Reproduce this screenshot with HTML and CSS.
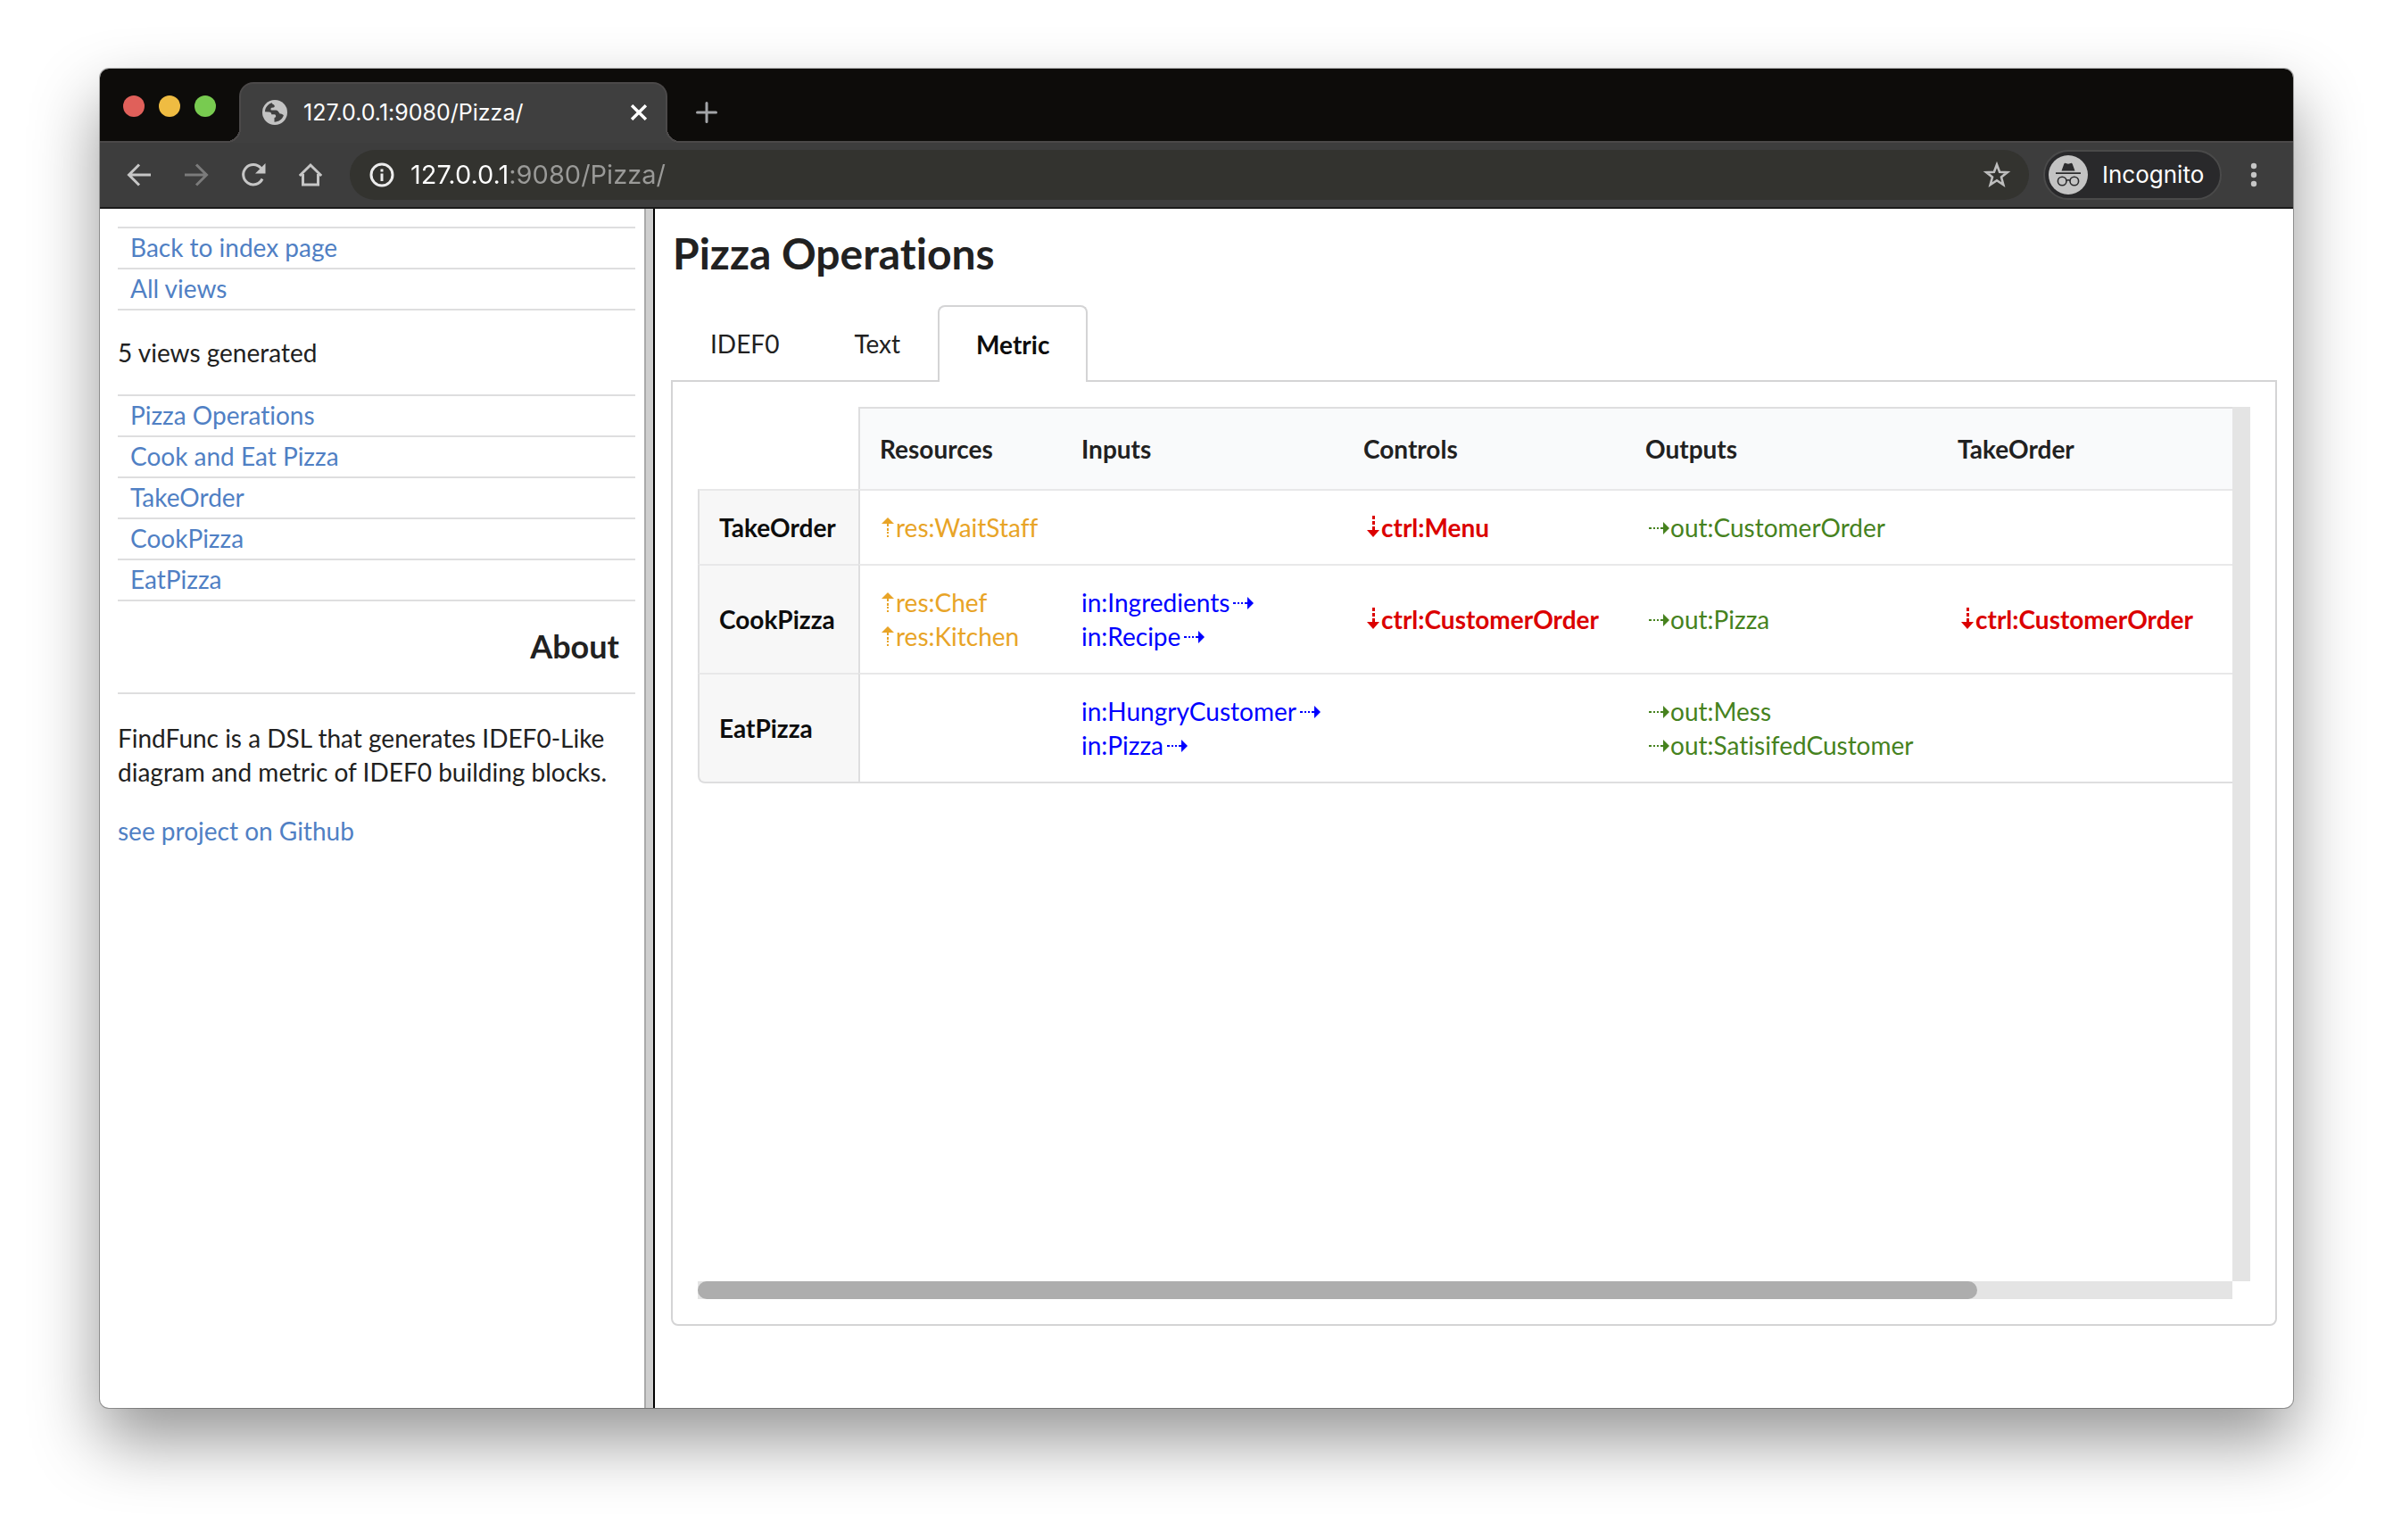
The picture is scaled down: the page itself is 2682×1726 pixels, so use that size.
FILE: index.html
```html
<!DOCTYPE html>
<html lang="en">
<head>
<meta charset="utf-8">
<title>127.0.0.1:9080/Pizza/</title>
<link rel="stylesheet" href="styles.css">
</head>
<body>
<svg class="sprite" aria-hidden="true">
  <symbol id="arrow-up" viewBox="0 0 18 22"><path d="M9 0l7 7H2z"/><path d="M8 7h2v3H8zM8 12h2v3H8zM8 16h2v2H8zM8 20h2v2H8z"/></symbol>
  <symbol id="arrow-down" viewBox="0 0 20 24"><path d="M11 24l7-8H4z"/><path d="M10 0h3v4h-3zM10 6h3v4h-3zM10 12h3v4h-3z"/></symbol>
  <symbol id="arrow-right" viewBox="0 0 28 14"><path d="M27 7l-7-7v14z"/><path d="M4 6h3v2H4zM9 6h2v2H9zM13 6h2v2h-2zM17 6h4v2h-4z"/></symbol>
</svg>
<div class="window">
  <header class="tabstrip">
    <div class="lights">
      <button class="light light-close" aria-label="Close window"></button>
      <button class="light light-min" aria-label="Minimize window"></button>
      <button class="light light-max" aria-label="Zoom window"></button>
    </div>
    <div class="browser-tab">
      <svg class="globe" viewBox="0 0 28 28" aria-hidden="true"><circle cx="14" cy="14" r="14" fill="#c3c3c3"/><path d="M11 3.200C6.500 4.300 3 8.500 3 13.200l4.500.3c1.800 0 2.800 1.200 2.800 2.700h3.200c1.500 0 2 1.500 1.500 3l-1.500.8v4.800c5-.2 9-3.300 10.400-7.500-1-1.300-2.400-1.900-4.200-1.900l-1.800-2.500c-.8-1.200-2-1.400-3.900-1.400h-3.500c-1.300 0-1.500-2.300-.2-2.800l2.200-.3c1.800-.3 1.600-2.600.2-3.200-1.200-.5-2-1-1.700-2z" fill="#3f3f3f"/></svg>
      <span class="browser-tab-title">127.0.0.1:9080/Pizza/</span>
      <button class="icon-button tab-close" aria-label="Close tab"><svg viewBox="0 0 16 16"><path d="M1 1l14 14M15 1L1 15" stroke="#fff" stroke-width="3"/></svg></button>
    </div>
    <button class="icon-button new-tab" aria-label="New tab"><svg viewBox="0 0 24 24"><path d="M12 1.500v21M1.500 12h21" stroke="#a3a5a8" stroke-width="3" stroke-linecap="round"/></svg></button>
  </header>
  <div class="toolbar">
    <nav class="nav-buttons" aria-label="Browser">
      <button class="icon-button" aria-label="Back"><svg viewBox="0 0 32 32"><path d="M29 16H5M16 4.500L4.500 16 16 27.500" fill="none" stroke="#c6c6c6" stroke-width="3"/></svg></button>
      <button class="icon-button" aria-label="Forward"><svg viewBox="0 0 32 32"><path d="M3 16h24M16 4.500L27.500 16 16 27.500" fill="none" stroke="#7b7b7b" stroke-width="3"/></svg></button>
      <button class="icon-button" aria-label="Reload"><svg viewBox="0 0 32 32"><path d="M26 20.500A11.200 11.200 0 1 1 24.500 8.500" fill="none" stroke="#c6c6c6" stroke-width="3"/><path d="M29.500 3v11.500H18z" fill="#c6c6c6"/></svg></button>
      <button class="icon-button" aria-label="Home"><svg viewBox="0 0 32 32"><path d="M7.500 15v12h17V15M3.800 17L16 5l12.200 12" fill="none" stroke="#c6c6c6" stroke-width="3"/></svg></button>
    </nav>
    <div class="omnibox">
      <svg class="info" viewBox="0 0 28 28" aria-hidden="true"><circle cx="14" cy="14" r="12" fill="none" stroke="#ececec" stroke-width="3"/><path d="M12.500 12.500h3V21h-3zM12.500 7.500h3v3h-3z" fill="#ececec"/></svg>
      <input class="url" type="text" aria-label="Address" value="127.0.0.1:9080/Pizza/">
      <button class="icon-button" aria-label="Bookmark"><svg viewBox="0 0 32 32"><path d="M16 4.500l3.100 8.200 8.700.4-6.800 5.400 2.300 8.500L16 22.200 8.700 27l2.300-8.500-6.800-5.400 8.700-.4z" fill="none" stroke="#bebebe" stroke-width="2.600"/></svg></button>
    </div>
    <button class="incognito">
      <svg viewBox="0 0 44 44" aria-hidden="true"><circle cx="22" cy="22" r="22" fill="#c3c3c3"/><path d="M14.500 17.500l2.700-7.500c.4-1 1-1.400 2-1.100l2.800.8 2.800-.8c1-.3 1.600.1 2 1.100l2.700 7.500z" fill="#2b2b2d"/><path d="M8 20.200h28" stroke="#2b2b2d" stroke-width="1.800"/><circle cx="15.200" cy="29" r="4.800" fill="none" stroke="#2b2b2d" stroke-width="1.600"/><circle cx="28.800" cy="29" r="4.800" fill="none" stroke="#2b2b2d" stroke-width="1.600"/><path d="M20 28.500q2-1.400 4 0" fill="none" stroke="#2b2b2d" stroke-width="1.600"/></svg>
      <span>Incognito</span>
    </button>
    <button class="icon-button menu" aria-label="Menu"><svg viewBox="0 0 32 32"><g fill="#c6c6c6"><circle cx="16" cy="6" r="3.200"/><circle cx="16" cy="16" r="3.200"/><circle cx="16" cy="26" r="3.200"/></g></svg></button>
  </div>
  <div class="page">
    <aside class="sidebar">
      <ul class="links">
        <li><a href="#index">Back to index page</a></li>
        <li><a href="#views">All views</a></li>
      </ul>
      <p>5 views generated</p>
      <ul class="links">
        <li><a href="#pizza-operations">Pizza Operations</a></li>
        <li><a href="#cook-and-eat">Cook and Eat Pizza</a></li>
        <li><a href="#take-order">TakeOrder</a></li>
        <li><a href="#cook-pizza">CookPizza</a></li>
        <li><a href="#eat-pizza">EatPizza</a></li>
      </ul>
      <h3>About</h3>
      <p>FindFunc is a DSL that generates IDEF0-Like diagram and metric of IDEF0 building blocks.</p>
      <p><a href="#github">see project on Github</a></p>
    </aside>
    <div class="splitter" role="separator"></div>
    <main class="main">
      <h1>Pizza Operations</h1>
      <div class="tabs" role="tablist">
        <button class="tab" role="tab">IDEF0</button>
        <button class="tab" role="tab">Text</button>
        <button class="tab active" role="tab" aria-selected="true">Metric</button>
      </div>
      <section class="panel" role="tabpanel">
        <div class="viewport">
          <table class="metric">
            <colgroup><col class="c-name"><col class="c-res"><col class="c-in"><col class="c-ctrl"><col class="c-out"><col></colgroup>
            <thead>
              <tr><td></td><th scope="col">Resources</th><th scope="col">Inputs</th><th scope="col">Controls</th><th scope="col">Outputs</th><th scope="col">TakeOrder</th></tr>
            </thead>
            <tbody>
              <tr>
                <th scope="row">TakeOrder</th>
                <td class="res"><svg class="up"><use href="#arrow-up"/></svg>res:WaitStaff</td>
                <td></td>
                <td class="ctrl"><svg class="down"><use href="#arrow-down"/></svg>ctrl:Menu</td>
                <td class="out"><svg class="right"><use href="#arrow-right"/></svg>out:CustomerOrder</td>
                <td></td>
              </tr>
              <tr>
                <th scope="row">CookPizza</th>
                <td class="res"><svg class="up"><use href="#arrow-up"/></svg>res:Chef<br><svg class="up"><use href="#arrow-up"/></svg>res:Kitchen</td>
                <td class="in">in:Ingredients<svg class="right"><use href="#arrow-right"/></svg><br>in:Recipe<svg class="right"><use href="#arrow-right"/></svg></td>
                <td class="ctrl"><svg class="down"><use href="#arrow-down"/></svg>ctrl:CustomerOrder</td>
                <td class="out"><svg class="right"><use href="#arrow-right"/></svg>out:Pizza</td>
                <td class="ctrl"><svg class="down"><use href="#arrow-down"/></svg>ctrl:CustomerOrder</td>
              </tr>
              <tr>
                <th scope="row">EatPizza</th>
                <td></td>
                <td class="in">in:HungryCustomer<svg class="right"><use href="#arrow-right"/></svg><br>in:Pizza<svg class="right"><use href="#arrow-right"/></svg></td>
                <td></td>
                <td class="out"><svg class="right"><use href="#arrow-right"/></svg>out:Mess<br><svg class="right"><use href="#arrow-right"/></svg>out:SatisifedCustomer</td>
                <td></td>
              </tr>
            </tbody>
          </table>
        </div>
        <div class="track-y"></div>
        <div class="track-x"><div class="thumb" style="width:83.4%"></div></div>
      </section>
    </main>
  </div>
</div>
</body>
</html>
```
FILE: styles.css
```css
* { box-sizing: border-box; }

body {
  margin: 0;
  min-height: 100vh;
  padding: 77px 112px 148px;
  display: flex;
  background: #fff;
  color: #212121;
  font: 28px/38px Lato, "Liberation Sans", sans-serif;
  font-variant-ligatures: none;
}

button { margin: 0; padding: 0; border: 0; background: none; color: inherit; font: inherit; }
svg { display: block; }
a { color: #5080c4; text-decoration: none; }
.sprite { position: absolute; width: 0; height: 0; }

.window {
  flex: 1;
  min-width: 0;
  display: flex;
  flex-direction: column;
  overflow: hidden;
  border-radius: 10px;
  background: #fff;
  box-shadow: 0 0 0 1px rgba(0, 0, 0, .3), 0 36px 76px rgba(0, 0, 0, .42);
}

/* browser chrome */
.tabstrip {
  height: 83px;
  display: flex;
  align-items: flex-end;
  padding-left: 26px;
  background: #0d0c0a;
  border-bottom: 2px solid #4b4949;
  font-family: Inter, "Liberation Sans", sans-serif;
}
.lights { display: flex; gap: 16px; margin: 0 26px 27px 0; }
.light { width: 24px; height: 24px; border-radius: 50%; }
.light-close { background: #e0605a; }
.light-min { background: #efbc42; }
.light-max { background: #78cb50; }

.browser-tab {
  position: relative;
  width: 480px;
  height: 68px;
  margin-bottom: -2px;
  padding: 0 21px 2px 24px;
  display: flex;
  align-items: center;
  gap: 18px;
  border: 2px solid #4b4949;
  border-bottom: 0;
  border-radius: 16px 16px 0 0;
  background: #3f3f3f;
  color: #fff;
  font-size: 25px;
}
.browser-tab::before,
.browser-tab::after {
  content: "";
  position: absolute;
  bottom: 0;
  width: 16px;
  height: 16px;
}
.browser-tab::before { left: -16px; background: radial-gradient(circle at 0 0, transparent 14px, #4b4949 14px 16px, #3f3f3f 16px); }
.browser-tab::after { right: -16px; background: radial-gradient(circle at 100% 0, transparent 14px, #4b4949 14px 16px, #3f3f3f 16px); }
.globe { width: 28px; height: 28px; }
.browser-tab-title { flex: 1; }
.icon-button { flex: none; width: 32px; height: 32px; }
.tab-close { width: 18px; height: 18px; }
.new-tab { width: 24px; height: 24px; margin: 0 0 20px 32px; }

.toolbar {
  height: 74px;
  padding: 0 28px;
  display: flex;
  align-items: center;
  background: #3d3d3d;
  border-bottom: 2px solid #1a1a1a;
  font-family: Inter, "Liberation Sans", sans-serif;
}
.nav-buttons { display: flex; gap: 32px; margin-right: 28px; }
.omnibox {
  flex: 1;
  height: 56px;
  display: flex;
  align-items: center;
  gap: 18px;
  padding: 0 20px 0 22px;
  border-radius: 28px;
  background: #33332f;
}
.info { flex: none; width: 28px; height: 28px; }
.url {
  flex: 1;
  min-width: 0;
  padding: 0;
  border: 0;
  outline: 0;
  font: inherit;
  font-size: 29px;
  color: transparent;
  background: linear-gradient(90deg, #fff 112px, #9a9a98 112px);
  -webkit-background-clip: text;
  background-clip: text;
}
.incognito {
  height: 56px;
  width: 200px;
  margin: 0 20px 0 16px;
  padding-left: 4px;
  display: flex;
  align-items: center;
  gap: 16px;
  border: 2px solid #4a4a4a;
  border-radius: 28px;
  background: #29292b;
  color: #fff;
  font-size: 26px;
}
.incognito svg { width: 44px; height: 44px; }

/* page */
.page { flex: 1; display: flex; }
.sidebar { flex: none; width: 610px; padding: 20px 10px 20px 20px; }
.sidebar p { margin: 28px 0; }
.links { list-style: none; margin: 0; padding: 0; border-bottom: 2px solid #dededf; }
.links li { height: 46px; padding: 2px 14px; border-top: 2px solid #dededf; }
.sidebar h3 {
  margin: 0 0 30px;
  padding: 30px 18px 32px;
  border-bottom: 2px solid #dededf;
  text-align: right;
  font-size: 36px;
  line-height: 40px;
}
.splitter { flex: none; width: 12px; background: #cecece; border-left: 2px solid #a9a9a9; border-right: 2px solid #000; }

.main { flex: 1; min-width: 0; padding: 20px 18px; }
h1 { margin: 0 0 28px; padding-left: 2px; font-size: 48px; line-height: 60px; }
.tabs { display: flex; padding-left: 2px; }
.tab { height: 84px; padding: 2px 42px 0; }
.tab.active {
  position: relative;
  height: 86px;
  margin-bottom: -2px;
  padding: 0 41px;
  border: 2px solid #d4d4d5;
  border-bottom: 0;
  border-radius: 8px 8px 0 0;
  background: #fff;
  color: #0d0d0d;
  font-weight: 700;
}
.panel {
  display: grid;
  grid-template: 980px 20px / minmax(0, 1fr) 20px;
  padding: 28px;
  border: 2px solid #d4d4d5;
  border-radius: 0 0 8px 8px;
}
.viewport { overflow: hidden; }
.track-y, .track-x { background: #e4e4e4; }
.thumb { height: 20px; border-radius: 10px; background: #adadad; }

.metric { width: 100%; table-layout: fixed; border-collapse: separate; border-spacing: 0; white-space: nowrap; }
.c-name { width: 180px; }
.c-res { width: 228px; }
.c-in { width: 316px; }
.c-ctrl { width: 316px; }
.c-out { width: 350px; }
.metric th, .metric td { padding: 22px 0 22px 22px; border-top: 2px solid #e8e8e9; text-align: left; vertical-align: middle; }
.metric thead th { padding: 26px 0 26px 22px; border-top-color: #dededf; background: #f9fafb; }
.metric thead td { border-top-color: transparent; }
.metric tr > :nth-child(2) { border-left: 2px solid #dededf; }
.metric tbody th { border-left: 2px solid #dededf; background: #f7f7f7; color: #0d0d0d; }
.metric tbody tr:last-child > * { border-bottom: 2px solid #dededf; }
.metric tbody tr:last-child th { border-bottom-left-radius: 8px; }
.metric svg { display: inline-block; fill: currentColor; }
.up { width: 18px; height: 22px; }
.down { width: 20px; height: 24px; }
.right { width: 28px; height: 14px; vertical-align: 3px; }
.res { color: #e8a427; }
.in { color: #00f; }
.ctrl { color: #db0000; font-weight: 700; }
.out { color: #46821e; }
```
